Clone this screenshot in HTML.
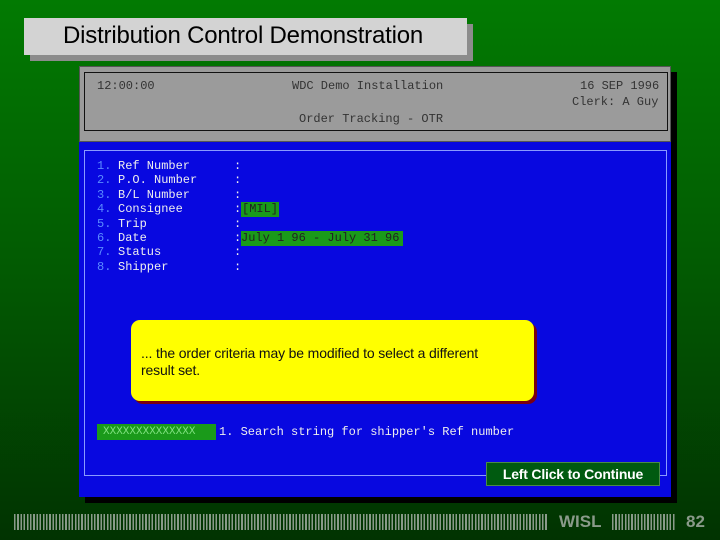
<!DOCTYPE html>
<html><head><style>
*{margin:0;padding:0;box-sizing:border-box}
body{width:720px;height:540px;overflow:hidden;position:relative;background:linear-gradient(#027a02,#025a02 50%,#013301);font-family:"Liberation Sans",sans-serif}
.abs{position:absolute}
.mono{font-family:"Liberation Mono",monospace;font-size:12px;white-space:pre}
.bars{background:repeating-linear-gradient(90deg,#8a9a8a 0 1.6px,transparent 1.6px 3.2px);height:16px}
</style></head><body>
<div class="abs" style="left:30px;top:24px;width:443px;height:37px;background:#8c8c8c"></div>
<div class="abs" style="left:24px;top:18px;width:443px;height:37px;background:#d3d3d3;font-size:24px;padding:4px 0 0 39px;color:#000;letter-spacing:-0.2px">Distribution Control Demonstration</div>

<div class="abs" style="left:85px;top:72px;width:592px;height:431px;background:#000"></div>
<div class="abs" style="left:79px;top:66px;width:592px;height:76px;background:#9b9b9b;border:1px solid #555"></div>
<div class="abs" style="left:84px;top:72px;width:584px;height:59px;border:1px solid #111"></div>
<div class="abs mono" style="left:97px;top:79px;color:#333">12:00:00</div>
<div class="abs mono" style="left:292px;top:79px;color:#333">WDC Demo Installation</div>
<div class="abs mono" style="left:580px;top:79px;color:#333">16 SEP 1996</div>
<div class="abs mono" style="left:572px;top:95px;color:#333">Clerk: A Guy</div>
<div class="abs mono" style="left:299px;top:112px;color:#333">Order Tracking - OTR</div>

<div class="abs" style="left:79px;top:142px;width:592px;height:355px;background:#0808e0"></div>
<div class="abs" style="left:84px;top:150px;width:583px;height:326px;border:1px solid #8a9aff"></div>

<div class="abs mono" style="left:97px;top:159px;line-height:14.4px;color:#5a8aff">1.
2.
3.
4.
5.
6.
7.
8.</div>
<div class="abs mono" style="left:118px;top:159px;line-height:14.4px;color:#eee">Ref Number
P.O. Number
B/L Number
Consignee
Trip
Date
Status
Shipper</div>
<div class="abs mono" style="left:234px;top:159px;line-height:14.4px;color:#eee">:
:
:
:
:
:
:
:</div>
<div class="abs mono" style="left:241px;top:202px;background:#1a9a1a;color:#222;padding:0 1px;height:15px;line-height:15px">[MIL]</div>
<div class="abs mono" style="left:241px;top:231px;background:#1a9a1a;color:#222;width:162px;height:15px;line-height:15px">July 1 96 - July 31 96</div>

<div class="abs" style="left:134px;top:323px;width:403px;height:81px;background:#7a0010;border-radius:9px"></div>
<div class="abs" style="left:131px;top:320px;width:403px;height:81px;background:#ffff00;border-radius:9px;font-size:14px;line-height:17px;padding:25px 0 0 10px;color:#111;letter-spacing:-0.15px">... the order criteria may be modified to select a different<br>result set.</div>

<div class="abs mono" style="left:97px;top:424px;width:119px;height:16px;line-height:16px;background:#1a9a1a;color:#7ee07e;padding-left:6px;font-size:11px">XXXXXXXXXXXXXX</div>
<div class="abs mono" style="left:219px;top:425px;color:#eee">1. Search string for shipper's Ref number</div>

<div class="abs" style="left:486px;top:462px;width:174px;height:24px;background:#005a10;border:1px solid #4a8a4a;color:#fff;font-weight:bold;font-size:14px;text-align:center;line-height:22px;letter-spacing:-0.2px">Left Click to Continue</div>

<div class="abs bars" style="left:14px;top:514px;width:534px"></div>
<div class="abs" style="left:559px;top:512px;color:#8a9a8a;font-weight:bold;font-size:17px">WISL</div>
<div class="abs bars" style="left:612px;top:514px;width:63px"></div>
<div class="abs" style="left:686px;top:512px;color:#8a9a8a;font-weight:bold;font-size:17px">82</div>
</body></html>
